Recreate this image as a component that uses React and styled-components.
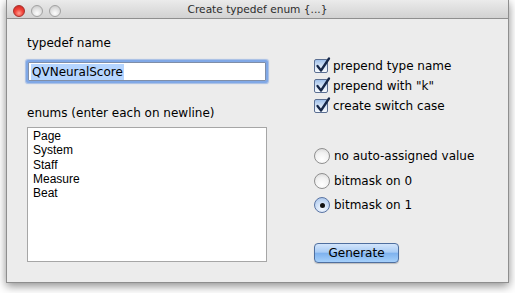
import React from "react";
import styled, { createGlobalStyle } from "styled-components";

const Global = createGlobalStyle`
    html, body {
        margin: 0;
        background: #ffffff;
    }
    body {
        font-family: "DejaVu Sans", "Liberation Sans", sans-serif;
        font-size: 12px;
        color: #000;
    }
`;

const Page = styled.div`
    width: 515px;
    height: 293px;
    padding-left: 6px;
    box-sizing: border-box;
    overflow: hidden;
`;

const Window = styled.div`
    width: 503px;
    height: 283px;
    box-sizing: border-box;
    background: #ececec;
    border: 1px solid #8e8e8e;
    border-top: none;
    box-shadow: 0 3px 9px rgba(0, 0, 0, 0.45);
    display: flex;
    flex-direction: column;
`;

const TitleBar = styled.div`
    height: 18px;
    flex: none;
    position: relative;
    display: flex;
    align-items: center;
    justify-content: center;
    background: linear-gradient(#ebebeb, #d2d2d2);
    border-bottom: 1px solid #8f8f8f;
    font-size: 10.6px;
    color: #2c2c2c;
`;

const Lights = styled.div`
    position: absolute;
    left: 6px;
    top: 5px;
    display: flex;
    gap: 6px;
`;

const Light = styled.span`
    width: 12px;
    height: 12px;
    border-radius: 50%;
    box-sizing: border-box;
    border: 1px solid ${(p) => (p.$red ? "#a8302b" : "#a2a2a2")};
    background: ${(p) =>
        p.$red
            ? "radial-gradient(circle at 50% 72%, #ffa092 0%, #f2443b 45%, #c6211c 100%)"
            : "radial-gradient(circle at 50% 72%, #fdfdfd 0%, #e2e2e2 50%, #c2c2c2 100%)"};
`;

const Content = styled.div`
    flex: 1;
    display: grid;
    grid-template-columns: 240px 1fr;
    column-gap: 47px;
    padding: 17px 0 0 20px;
`;

const Column = styled.div`
    display: flex;
    flex-direction: column;
`;

const Label = styled.div`
    line-height: 15px;
    margin-top: ${(p) => p.$top || 0}px;
`;

const Field = styled.div`
    margin: 11px 1px 0 1px;
    height: 17px;
    background: #fff;
    border: 1px solid #7f8ea8;
    border-radius: 1px;
    box-shadow: 0 0 0 2px #80a8e6, 0 0 1px 3px rgba(120, 160, 225, 0.6);
    display: flex;
    align-items: center;
    padding-left: 2px;
`;

const Selected = styled.span`
    background: #b5d5ff;
    line-height: 16px;
    padding: 0 1px;
`;

const ListBox = styled.div`
    margin-top: 6px;
    height: 135px;
    box-sizing: border-box;
    background: #fff;
    border: 1px solid #a6a6a6;
    padding: 1px 0 0 5px;
    font-family: "Liberation Sans", Arial, sans-serif;
    font-size: 12px;
    line-height: 14.3px;
`;

const Option = styled.label`
    display: flex;
    align-items: center;
    height: ${(p) => p.$h}px;
    gap: ${(p) => p.$gap}px;
`;

const Check = styled.span`
    width: 14px;
    height: 14px;
    flex: none;
    position: relative;
    box-sizing: border-box;
    border: 1px solid #5b6f92;
    border-radius: 2px;
    background: linear-gradient(#9fc0ea, #dbe8f8 55%, #f6f9fd);
    svg {
        position: absolute;
        left: 0px;
        top: -4px;
    }
`;

const Radio = styled.span`
    width: 16px;
    height: 16px;
    flex: none;
    box-sizing: border-box;
    border-radius: 50%;
    border: 1px solid ${(p) => (p.$on ? "#5a74a3" : "#8f8f8f")};
    background: ${(p) =>
        p.$on
            ? "radial-gradient(circle at 50% 75%, #f5f9ff 0%, #c9dcf5 55%, #9ebde6 100%)"
            : "radial-gradient(circle at 50% 75%, #ffffff 0%, #f1f1f1 55%, #d2d2d2 100%)"};
    display: flex;
    align-items: center;
    justify-content: center;
    &::after {
        content: "";
        width: 5px;
        height: 5px;
        border-radius: 50%;
        background: #111;
        display: ${(p) => (p.$on ? "block" : "none")};
    }
`;

const Group = styled.div`
    display: flex;
    flex-direction: column;
    margin-top: ${(p) => p.$top}px;
`;

const Button = styled.button`
    align-self: flex-start;
    margin-top: 25px;
    width: 85px;
    height: 20px;
    padding: 0;
    font-family: "DejaVu Sans", sans-serif;
    font-size: 12px;
    color: #000;
    border: 1px solid #4f6f9f;
    border-radius: 4px;
    background: linear-gradient(#d3e5fb 0%, #a9ccf5 45%, #7fb2ee 52%, #a5d0fb 100%);
    box-shadow: 0 1px 1px rgba(0, 0, 0, 0.2);
`;

function CheckMark() {
    return (
        <svg width="16" height="17" viewBox="0 0 16 17">
            <path d="M2.5 10 L6 14.5 L14 2.5" fill="none" stroke="#16284a" strokeWidth="2.3" strokeLinecap="round" strokeLinejoin="round" />
        </svg>
    );
}

const checks = ["prepend type name", 'prepend with "k"', "create switch case"];
const radios = ["no auto-assigned value", "bitmask on 0", "bitmask on 1"];

export default function App() {
    return (
        <Page>
            <Global />
            <Window>
                <TitleBar>
                    <Lights>
                        <Light $red />
                        <Light />
                        <Light />
                    </Lights>
                    Create typedef enum {"{...}"}
                </TitleBar>
                <Content>
                    <Column>
                        <Label>typedef name</Label>
                        <Field>
                            <Selected>QVNeuralScore</Selected>
                        </Field>
                        <Label $top={25}>enums (enter each on newline)</Label>
                        <ListBox>
                            <div>Page</div>
                            <div>System</div>
                            <div>Staff</div>
                            <div>Measure</div>
                            <div>Beat</div>
                        </ListBox>
                    </Column>
                    <Column>
                        <Group $top={20}>
                            {checks.map((c) => (
                                <Option key={c} $h={20} $gap={5}>
                                    <Check><CheckMark /></Check>
                                    {c}
                                </Option>
                            ))}
                        </Group>
                        <Group $top={28}>
                            {radios.map((r, i) => (
                                <Option key={r} $h={24.5} $gap={4}>
                                    <Radio $on={i === 2} />
                                    {r}
                                </Option>
                            ))}
                        </Group>
                        <Button>Generate</Button>
                    </Column>
                </Content>
            </Window>
        </Page>
    );
}
